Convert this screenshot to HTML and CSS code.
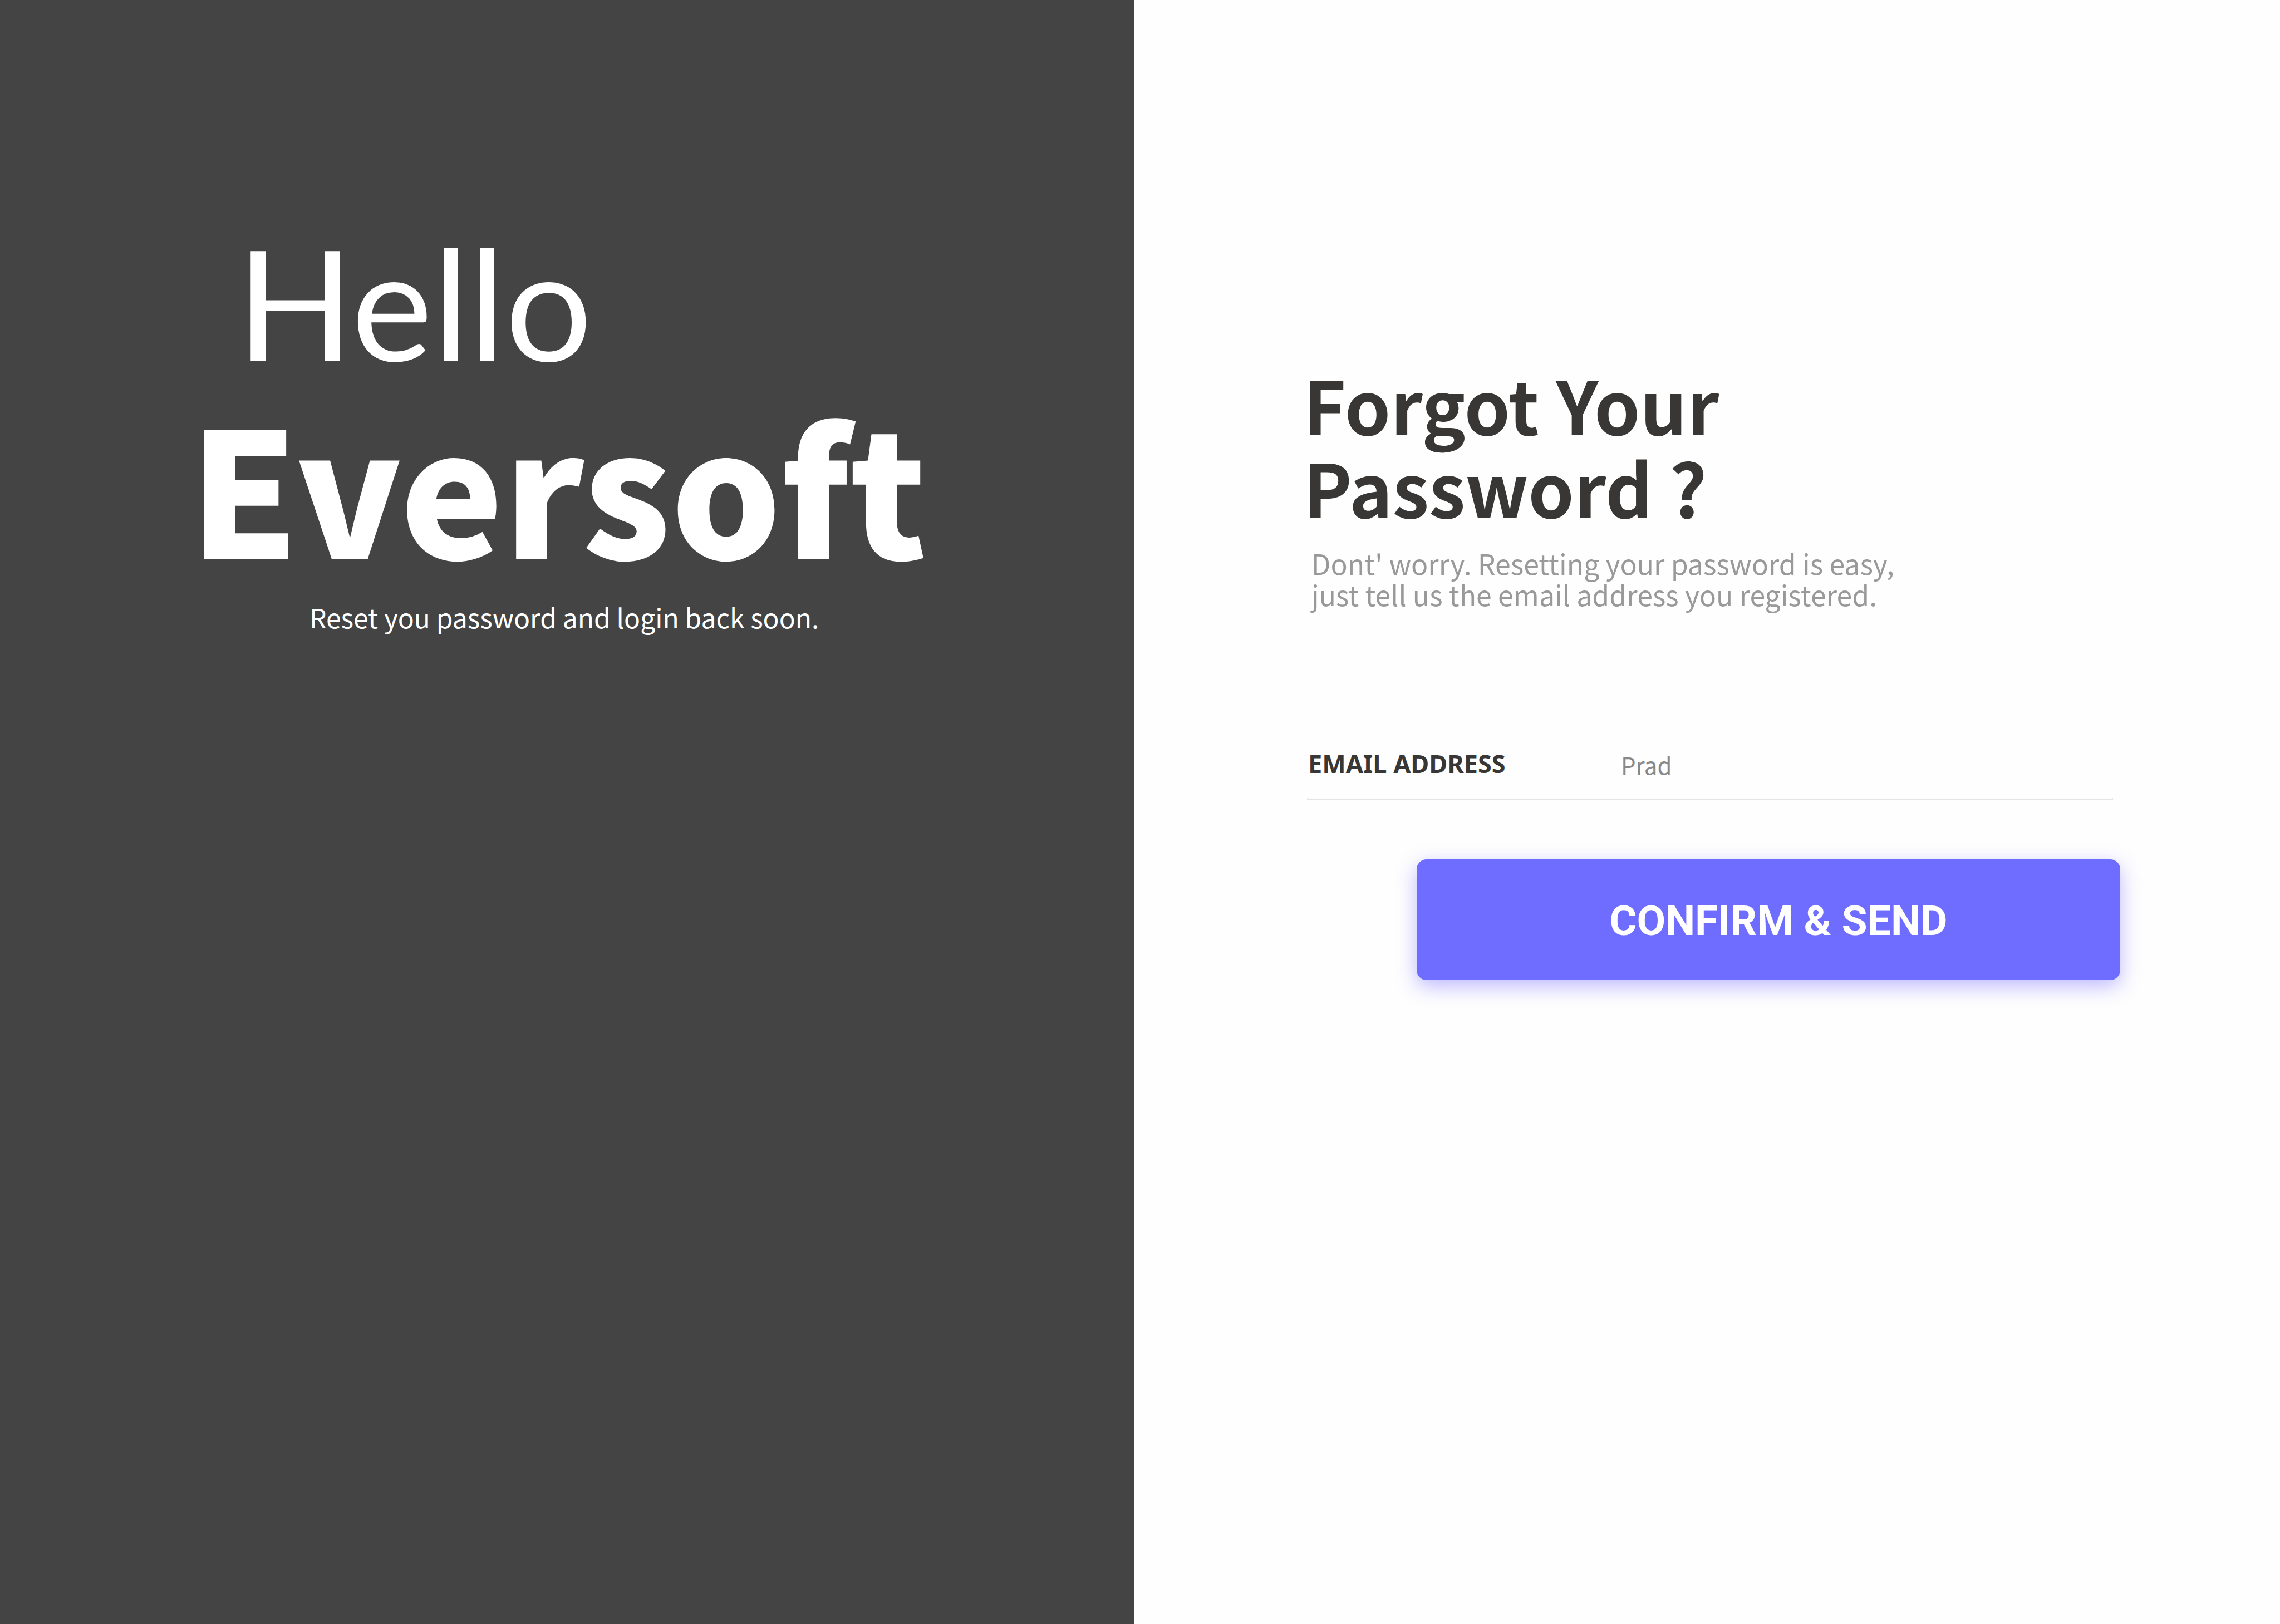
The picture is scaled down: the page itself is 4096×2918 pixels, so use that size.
FILE: index.html
```html
<!DOCTYPE html>
<html lang="en">
<head>
  <meta charset="utf-8">
  <meta name="viewport" content="width=device-width, initial-scale=1">
  <title>Forgot Your Password</title>
  <link rel="stylesheet" href="styles.css">
</head>
<body>
  <div class="page">
    <aside class="intro">
      <p class="greeting">Hello</p>
      <p class="brand">Eversoft</p>
      <p class="tagline">Reset you password and login back soon.</p>
    </aside>
    <main class="panel">
      <h1 class="title">Forgot Your<br>Password ?</h1>
      <p class="hint">Dont' worry. Resetting your password is easy,<br>just tell us the email address you registered.</p>
      <form class="form">
        <div class="field">
          <label class="label" for="email">EMAIL ADDRESS</label>
          <input class="input" id="email" type="text" value="Prad">
        </div>
        <div class="rule"></div>
        <button class="button" type="submit">CONFIRM &amp; SEND</button>
      </form>
    </main>
  </div>
</body>
</html>
```

FILE: styles.css
```css
* {
  box-sizing: border-box;
}

body {
  margin: 0;
  background: #fefefe;
  color: #383735;
  font-family: "Noto Sans CJK SC", "Noto Sans", sans-serif;
}

p,
h1 {
  margin: 0;
}

.page {
  display: grid;
  grid-template-columns: 2038fr 2058fr;
  min-height: 100vh;
}

.intro {
  padding: 403px 0 0 340px;
  background: #444;
  color: #fff;
}

.greeting {
  padding-left: 85px;
  font-family: Lato, sans-serif;
  font-size: 276px;
  line-height: 280px;
}

.brand {
  margin-top: 14px;
  font-size: 312px;
  font-weight: 900;
  line-height: 344px;
}

.tagline {
  margin-top: 39px;
  padding-left: 216px;
  font-size: 48px;
  line-height: 56px;
}

.panel {
  padding: 650px 300px 0 310px;
}

.title {
  margin-left: -7px;
  font-size: 132px;
  font-weight: 700;
  line-height: 149px;
}

.hint {
  margin-top: 35px;
  padding-left: 8px;
  color: #999;
  font-size: 50px;
  line-height: 56px;
}

.form {
  display: flex;
  flex-direction: column;
  margin-top: 249px;
}

.field {
  display: flex;
  align-items: flex-start;
}

.label {
  width: 564px;
  padding-left: 2px;
  font-family: "Noto Sans", sans-serif;
  font-size: 45px;
  font-weight: 700;
  line-height: 56px;
}

.input {
  flex: 1;
  min-width: 0;
  height: 60px;
  padding: 0;
  border: 0;
  outline: 0;
  background: transparent;
  color: #888;
  font: inherit;
  font-size: 42px;
  line-height: 60px;
}

.rule {
  height: 4px;
  margin-top: 29px;
  border: 1px solid #e4e4e4;
}

.button {
  height: 217px;
  margin: 107px -13px 0 197px;
  padding: 2px 0 0 36px;
  border: 0;
  border-radius: 18px;
  background: #6f6dff;
  box-shadow: 0 11px 36px rgba(108, 99, 255, 0.45);
  color: #fff;
  font-family: Roboto, sans-serif;
  font-size: 75px;
  font-weight: 700;
}
```
